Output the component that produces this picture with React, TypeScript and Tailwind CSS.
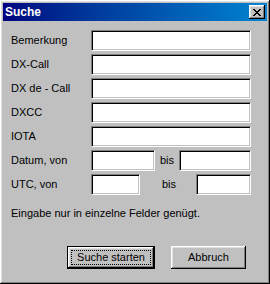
import React from 'react';

const sunken =
  'h-[21px] bg-white border border-t-[#808080] border-l-[#808080] border-r-white border-b-white shadow-[inset_1px_1px_0_#000,inset_-1px_-1px_0_#c0c0c0]';

const raised =
  'bg-[#c0c0c0] shadow-[inset_-1px_-1px_0_#000,inset_1px_1px_0_#fff,inset_-2px_-2px_0_#808080,inset_2px_2px_0_#dfdfdf]';

function Row({ label, children }: { label: string; children?: React.ReactNode }) {
  return (
    <div className="flex items-center h-[21px]">
      <span className="w-[80px] shrink-0">{label}</span>
      {children ?? <div className={`${sunken} w-[160px]`} />}
    </div>
  );
}

export default function App() {
  return (
    <div
      className={`w-[270px] h-[284px] p-[3px] flex flex-col text-[11px] leading-[13px] text-black ${raised}`}
      style={{ fontFamily: '"Liberation Sans", Arial, sans-serif' }}
    >
      {/* title bar */}
      <div className="h-[18px] shrink-0 flex items-center justify-between pl-[2px] pr-[2px] bg-gradient-to-r from-[#000080] to-[#1084d0]">
        <span className="text-white font-bold text-[12px]">Suche</span>
        <button className={`w-[16px] h-[14px] flex items-center justify-center ${raised}`} aria-label="Schließen">
          <svg width="8" height="7" viewBox="0 0 8 7" shapeRendering="crispEdges">
            <path
              d="M0 0h2v1H0zM6 0h2v1H6zM1 1h2v1H1zM5 1h2v1H5zM2 2h4v1H2zM3 3h2v1H3zM2 4h4v1H2zM1 5h2v1H1zM5 5h2v1H5zM0 6h2v1H0zM6 6h2v1H6z"
              fill="#000"
            />
          </svg>
        </button>
      </div>

      <div className="flex flex-col pl-[8px] pt-[9px]">
        <div className="flex flex-col gap-[3px]">
          <Row label="Bemerkung" />
          <Row label="DX-Call" />
          <Row label="DX de - Call" />
          <Row label="DXCC" />
          <Row label="IOTA" />
          <Row label="Datum, von">
            <div className={`${sunken} w-[64px]`} />
            <span className="w-[24px] pl-[5px]">bis</span>
            <div className={`${sunken} w-[72px]`} />
          </Row>
          <Row label="UTC, von">
            <div className={`${sunken} w-[49px]`} />
            <span className="w-[56px] pl-[22px]">bis</span>
            <div className={`${sunken} w-[55px]`} />
          </Row>
        </div>

        <p className="mt-[12px]">Eingabe nur in einzelne Felder genügt.</p>

        <div className="flex gap-[16px] mt-[26px] ml-[56px]">
          <button className="w-[88px] h-[23px] border border-black p-0">
            <div className={`w-full h-full p-[3px] ${raised}`}>
              <div className="w-full h-full border border-dotted border-black flex items-center justify-center">
                Suche starten
              </div>
            </div>
          </button>
          <button className={`w-[75px] h-[23px] flex items-center justify-center ${raised}`}>Abbruch</button>
        </div>
      </div>
    </div>
  );
}
